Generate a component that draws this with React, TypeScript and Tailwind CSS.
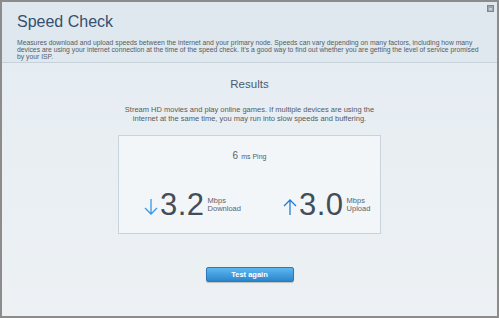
import React from 'react';

const SpeedStat = ({ arrow, value, label }: { arrow: 'down' | 'up'; value: string; label: string }) => (
  <div className="flex items-center">
    <svg width="14" height="18" viewBox="0 0 14 18" className="mt-[4px] mr-[2px]">
      {arrow === 'down' ? (
        <path d="M7 1 V16 M1 10 L7 16 L13 10" fill="none" stroke="#3a97e0" strokeWidth="1.3" />
      ) : (
        <path d="M7 17 V2 M1 8 L7 2 L13 8" fill="none" stroke="#1f7fd6" strokeWidth="1.3" />
      )}
    </svg>
    <span className="text-[31px] leading-none text-[#434d57] tracking-[0.5px]">{value}</span>
    <div className="ml-[3px] mt-[1px] flex flex-col text-[7.5px] leading-[8.5px] text-[#5a6470]">
      <span>Mbps</span>
      <span>{label}</span>
    </div>
  </div>
);

export default function App() {
  return (
    <div className="w-[499px] h-[318px] border-2 border-[#8c8c8c] bg-[#e7eef3] flex flex-col font-['Liberation_Sans',Arial,sans-serif] overflow-hidden">
      {/* Header */}
      <div className="relative h-[61px] shrink-0 bg-[#dfe8ef] border-b border-[#c6d1da] px-[15px] pt-[11px]">
        <h1 className="text-[16px] leading-[18px] text-[#34506c]">Speed Check</h1>
        <p className="mt-[8px] w-[462px] text-[6.8px] leading-[7px] text-[#555c63]">
          Measures download and upload speeds between the internet and your primary node. Speeds can vary depending on many factors, including how many devices are using your internet connection at the time of the speed check. It's a good way to find out whether you are getting the level of service promised by your ISP.
        </p>
        <div className="absolute top-[3px] right-[3px] w-[7px] h-[7px] bg-[#9aa5ad] border border-[#7d8790] flex items-center justify-center text-[6px] leading-none text-white">
          ×
        </div>
      </div>

      {/* Body */}
      <div className="flex-1 flex flex-col items-center bg-gradient-to-b from-[#e6edf2] to-[#edf1f4]">
        <h2 className="mt-[15px] text-[11.5px] leading-[13px] text-[#4a5a6b]">Results</h2>
        <p className="mt-[14px] w-[270px] text-center text-[7.5px] leading-[9px] text-[#555c63]">
          Stream HD movies and play online games. If multiple devices are using the internet at the same time, you may run into slow speeds and buffering.
        </p>

        <div className="mt-[12px] w-[263px] h-[99px] bg-[#f2f6f9] border border-[#c9d3db] flex flex-col items-center">
          <div className="mt-[12px] flex items-baseline text-[#565e66]">
            <span className="text-[10px]">6</span>
            <span className="ml-[3px] text-[7px]">ms Ping</span>
          </div>
          <div className="mt-[26px] w-full flex pl-[25px]">
            <div className="w-[139px]">
              <SpeedStat arrow="down" value="3.2" label="Download" />
            </div>
            <SpeedStat arrow="up" value="3.0" label="Upload" />
          </div>
        </div>

        <button className="mt-[33px] w-[88px] h-[15px] rounded-[2px] border border-[#2f78b8] bg-gradient-to-b from-[#5db7ef] to-[#2b86cc] text-white text-[7.5px] font-bold leading-none shadow-[0_1px_1px_rgba(0,0,0,0.2)]">
          Test again
        </button>
      </div>
    </div>
  );
}
